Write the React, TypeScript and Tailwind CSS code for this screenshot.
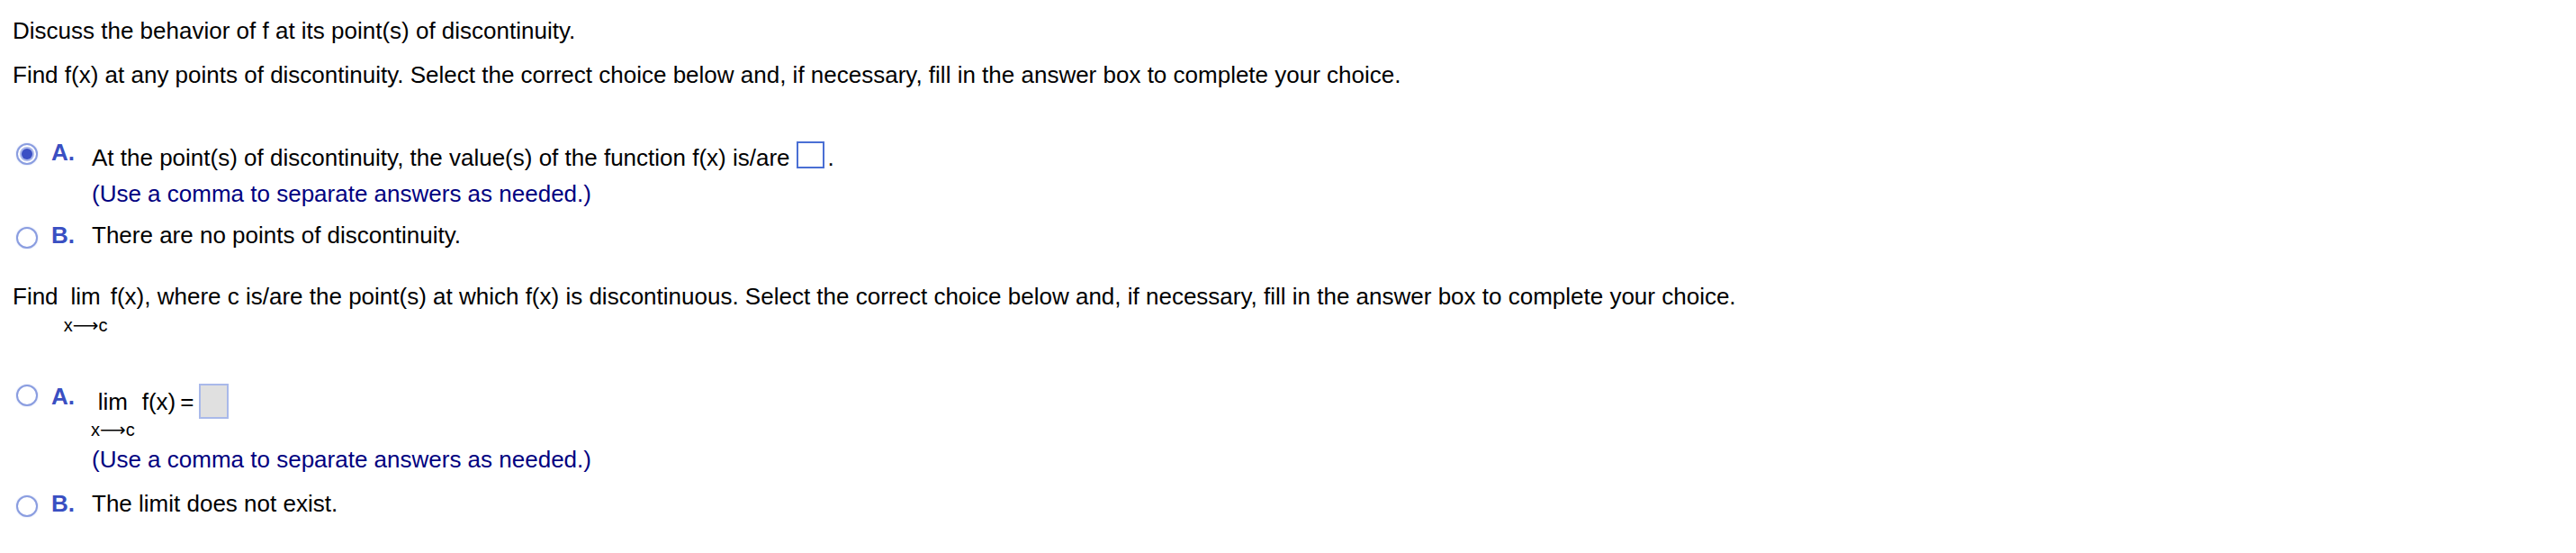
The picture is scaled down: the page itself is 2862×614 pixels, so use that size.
import React from "react";

function Radio({ checked }: { checked?: boolean }) {
  return (
    <span className="flex h-[24px] w-[24px] items-center justify-center rounded-full border-2 border-[#8a9de0] bg-white shadow-[0_0_2px_#c3cdf0]">
      {checked ? <span className="h-[12px] w-[12px] rounded-full bg-[#3b4fc4] shadow-[0_0_0_2px_#a9b6ea]" /> : null}
    </span>
  );
}

function Lim({ gap }: { gap: string }) {
  return (
    <span className="inline-flex flex-col items-center align-baseline">
      <span>lim</span>
      <span className={"-mx-[7px] whitespace-nowrap text-[20px] leading-[20px] " + gap}>
        x<span className="font-['DejaVu_Sans',sans-serif]">⟶</span>c
      </span>
    </span>
  );
}

export default function App() {
  return (
    <div className="min-h-[614px] w-[2862px] bg-white pl-[14px] pt-[19px] font-['Liberation_Sans',Arial,sans-serif] text-[26px] leading-[30px] text-black">
      <p>Discuss the behavior of f at its point(s) of discontinuity.</p>
      <p className="mt-[19px]">
        Find f(x) at any points of discontinuity. Select the correct choice below and, if necessary, fill in the answer box to complete your choice.
      </p>

      {/* Section 1, option A */}
      <div className="mt-[56px] flex">
        <div className="w-[43px] pl-[4px] pt-[5px]">
          <Radio checked />
        </div>
        <div className="w-[45px] font-bold text-[#3a4fc2]">A.</div>
        <div className="pt-[6px]">
          <div>
            At the point(s) of discontinuity, the value(s) of the function f(x) is/are
            <span className="ml-[7px] mr-[4px] -mt-[3px] inline-block h-[30px] w-[31px] align-[-3px] border-2 border-[#4a6fd4] bg-white" />.
          </div>
          <div className="mt-[10px] text-[#000080]">(Use a comma to separate answers as needed.)</div>
        </div>
      </div>

      {/* Section 1, option B */}
      <div className="mt-[16px] flex">
        <div className="w-[43px] pl-[4px] pt-[6px]">
          <Radio />
        </div>
        <div className="w-[45px] font-bold text-[#3a4fc2]">B.</div>
        <div>There are no points of discontinuity.</div>
      </div>

      <p className="mt-[38px]">
        Find <span className="ml-[6px] mr-[3px]"><Lim gap="mt-[7px]" /></span> f(x), where c is/are the point(s) at which f(x) is discontinuous. Select the correct choice below and, if necessary, fill in the answer box to complete your choice.
      </p>

      {/* Section 2, option A */}
      <div className="mt-[54px] flex">
        <div className="w-[43px] pl-[4px] pt-[2px]">
          <Radio />
        </div>
        <div className="w-[45px] font-bold text-[#3a4fc2]">A.</div>
        <div>
          <div className="flex items-start">
            <div className="ml-[6px] mt-[6px]">
              <Lim gap="mt-[6px]" />
            </div>
            <span className="ml-[15px] mt-[6px]">f(x)</span>
            <span className="ml-[5px] mt-[6px]">=</span>
            <span className="ml-[6px] mt-[1px] h-[39px] w-[33px] border-2 border-[#a9b9ea] bg-[#e0e0e0]" />
          </div>
          <div className="mt-[8px] text-[#000080]">(Use a comma to separate answers as needed.)</div>
        </div>
      </div>

      {/* Section 2, option B */}
      <div className="mt-[19px] flex">
        <div className="w-[43px] pl-[4px] pt-[6px]">
          <Radio />
        </div>
        <div className="w-[45px] font-bold text-[#3a4fc2]">B.</div>
        <div>The limit does not exist.</div>
      </div>
    </div>
  );
}
